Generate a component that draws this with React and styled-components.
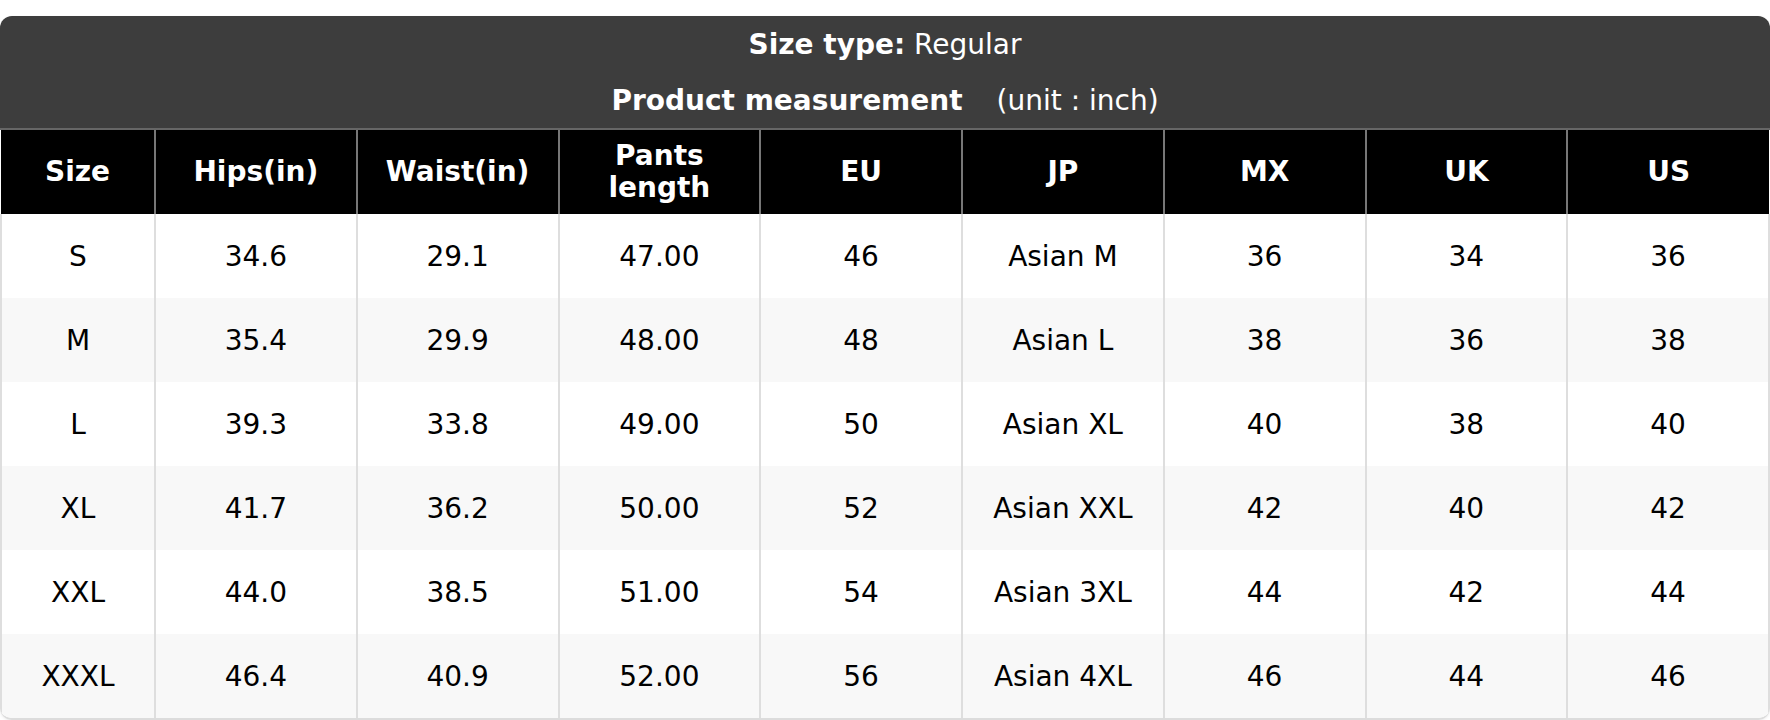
import React from "react";
import styled, { createGlobalStyle } from "styled-components";

const GlobalStyle = createGlobalStyle`
  html, body {
    margin: 0;
    padding: 0;
    background: #fff;
  }
  body {
    padding-top: 16px;
    font-family: "DejaVu Sans", "Liberation Sans", sans-serif;
  }
`;

const Card = styled.div`
  border-radius: 12px;
  overflow: hidden;
  border-bottom: 2px solid #dcdcdc;
  box-shadow: 0 1px 3px rgba(0, 0, 0, 0.08);
`;

const TitleBand = styled.div`
  background: #3d3d3d;
  color: #fff;
  font-size: 28px;
  border-bottom: 2px solid #666;
`;

const TitleLine = styled.div`
  height: 56px;
  display: flex;
  align-items: center;
  justify-content: center;
  white-space: pre;
`;

const Strong = styled.b`
  font-weight: 700;
`;

const Unit = styled.span`
  margin-left: 34px;
`;

const Table = styled.table`
  width: 100%;
  border-collapse: collapse;
  table-layout: fixed;
  font-size: 28px;
`;

const HeadCell = styled.th`
  background: #000;
  color: #fff;
  font-weight: 700;
  height: 84px;
  padding: 0 8px;
  line-height: 32px;
  text-align: center;
  vertical-align: middle;
  border-left: 2px solid #777;
  border-right: 2px solid #777;
  width: ${(p) => (p.$narrow ? "137px" : "auto")};
  &:first-child {
    border-left: none;
  }
  &:last-child {
    border-right: none;
  }
`;

const Row = styled.tr`
  background: ${(p) => (p.$striped ? "#f8f8f8" : "#fff")};
`;

const Cell = styled.td`
  height: 84px;
  padding: 0 8px;
  text-align: center;
  vertical-align: middle;
  color: #000;
  border-left: 2px solid #dedede;
  border-right: 2px solid #dedede;
`;

const columns = [
  "Size",
  "Hips(in)",
  "Waist(in)",
  "Pants length",
  "EU",
  "JP",
  "MX",
  "UK",
  "US",
];

const rows = [
  ["S", "34.6", "29.1", "47.00", "46", "Asian M", "36", "34", "36"],
  ["M", "35.4", "29.9", "48.00", "48", "Asian L", "38", "36", "38"],
  ["L", "39.3", "33.8", "49.00", "50", "Asian XL", "40", "38", "40"],
  ["XL", "41.7", "36.2", "50.00", "52", "Asian XXL", "42", "40", "42"],
  ["XXL", "44.0", "38.5", "51.00", "54", "Asian 3XL", "44", "42", "44"],
  ["XXXL", "46.4", "40.9", "52.00", "56", "Asian 4XL", "46", "44", "46"],
];

const SizeChart = () => {
  return (
    <Card>
      <TitleBand>
        <TitleLine>
          <Strong>Size type:</Strong> Regular
        </TitleLine>
        <TitleLine>
          <Strong>Product measurement</Strong>
          <Unit>(unit : inch)</Unit>
        </TitleLine>
      </TitleBand>
      <Table>
        <thead>
          <tr>
            {columns.map((col, index) => (
              <HeadCell key={col} $narrow={index === 0}>
                {col === "Pants length" ? (
                  <>
                    Pants
                    <br />
                    length
                  </>
                ) : (
                  col
                )}
              </HeadCell>
            ))}
          </tr>
        </thead>
        <tbody>
          {rows.map((row, index) => (
            <Row key={row[0]} $striped={index % 2 === 1}>
              {row.map((value, i) => (
                <Cell key={i}>{value}</Cell>
              ))}
            </Row>
          ))}
        </tbody>
      </Table>
    </Card>
  );
};

const App = () => (
  <>
    <GlobalStyle />
    <SizeChart />
  </>
);

export default App;
